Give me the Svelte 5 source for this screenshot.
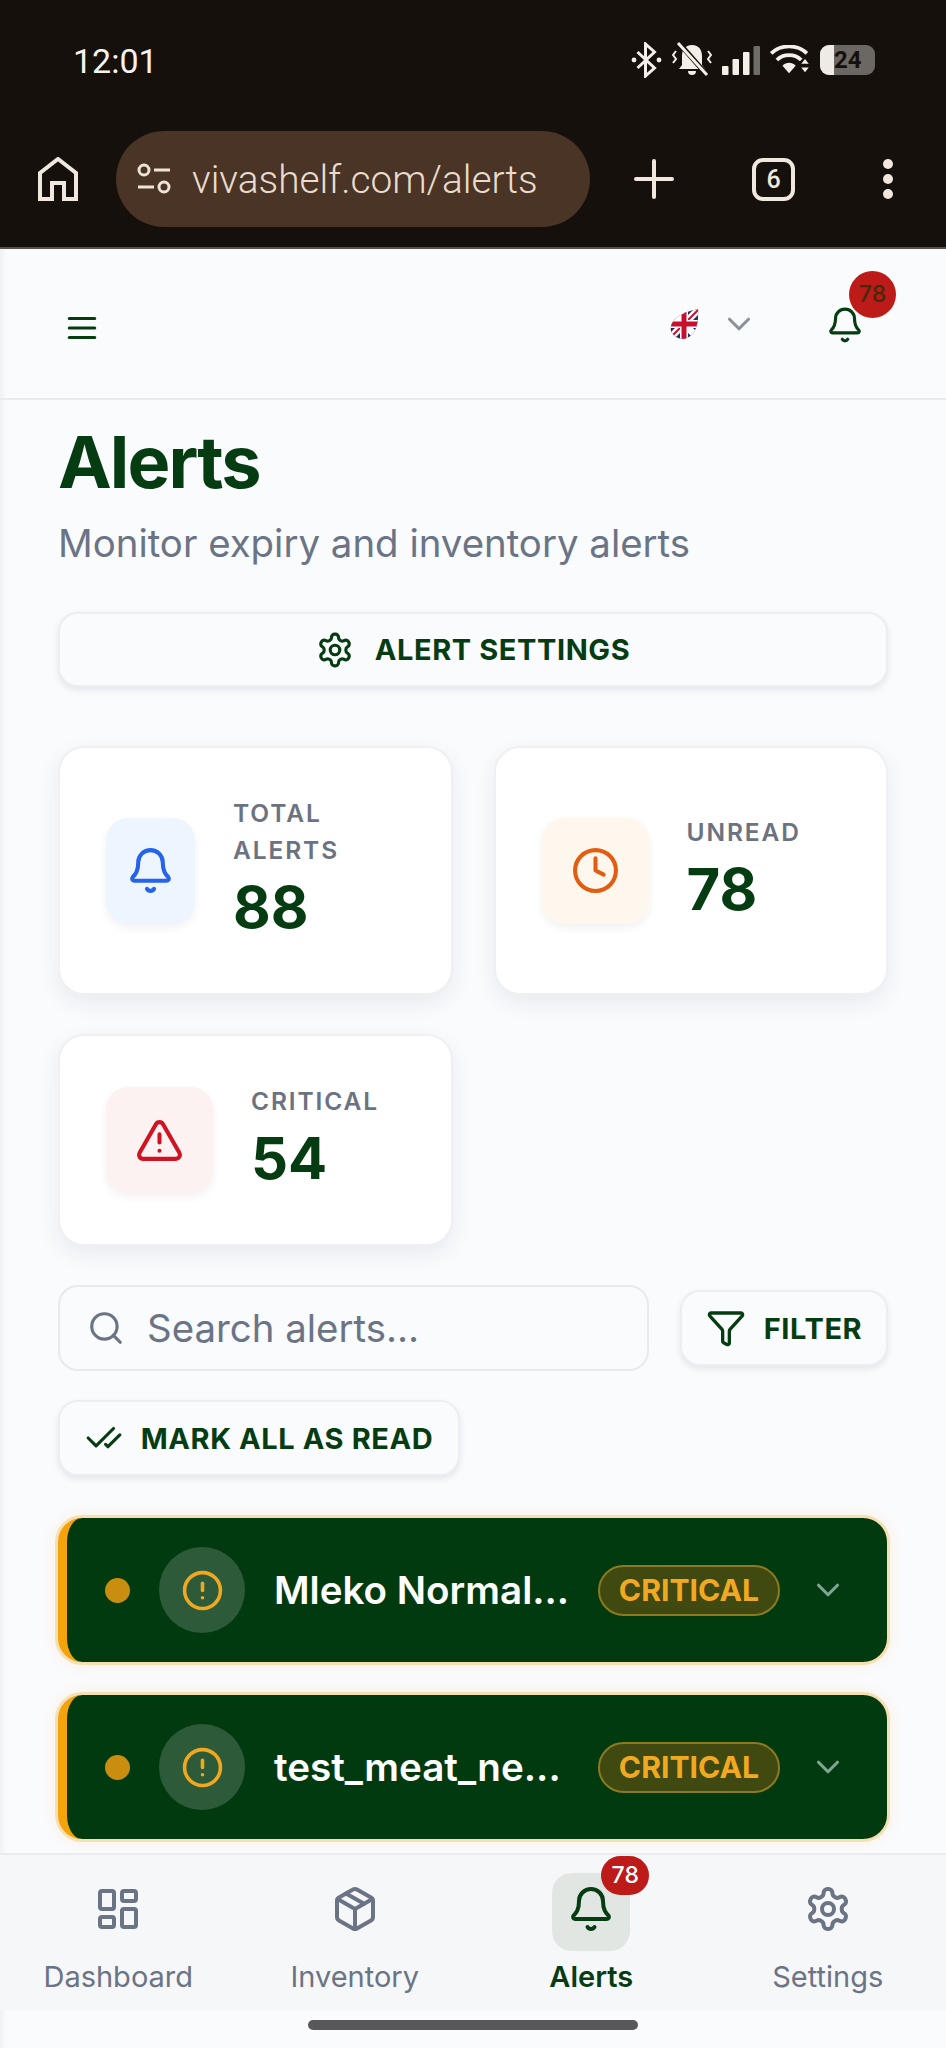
<script>
  const paths = {
    bell: '<path d="M10.268 21a2 2 0 0 0 3.464 0"/><path d="M3.262 15.326A1 1 0 0 0 4 17h16a1 1 0 0 0 .74-1.673C19.41 13.956 18 12.499 18 8A6 6 0 0 0 6 8c0 4.499-1.411 5.956-2.738 7.326"/>',
    gear: '<path d="M12.22 2h-.44a2 2 0 0 0-2 2v.18a2 2 0 0 1-1 1.73l-.43.25a2 2 0 0 1-2 0l-.15-.08a2 2 0 0 0-2.73.73l-.22.38a2 2 0 0 0 .73 2.73l.15.1a2 2 0 0 1 1 1.72v.51a2 2 0 0 1-1 1.74l-.15.09a2 2 0 0 0-.73 2.73l.22.38a2 2 0 0 0 2.73.73l.15-.08a2 2 0 0 1 2 0l.43.25a2 2 0 0 1 1 1.73V20a2 2 0 0 0 2 2h.44a2 2 0 0 0 2-2v-.18a2 2 0 0 1 1-1.73l.43-.25a2 2 0 0 1 2 0l.15.08a2 2 0 0 0 2.73-.73l.22-.39a2 2 0 0 0-.73-2.73l-.15-.08a2 2 0 0 1-1-1.74v-.5a2 2 0 0 1 1-1.74l.15-.09a2 2 0 0 0 .73-2.73l-.22-.38a2 2 0 0 0-2.73-.73l-.15.08a2 2 0 0 1-2 0l-.43-.25a2 2 0 0 1-1-1.73V4a2 2 0 0 0-2-2z"/><circle cx="12" cy="12" r="3"/>',
    clock: '<circle cx="12" cy="12" r="10"/><path d="M12 6v6l4 2"/>',
    triangle: '<path d="m21.73 18-8-14a2 2 0 0 0-3.48 0l-8 14A2 2 0 0 0 4 21h16a2 2 0 0 0 1.73-3"/><path d="M12 9v4"/><path d="M12 17h.01"/>',
    search: '<path d="m21 21-4.34-4.34"/><circle cx="11" cy="11" r="8"/>',
    funnel: '<path d="M10 20a1 1 0 0 0 .553.895l2 1A1 1 0 0 0 14 21v-7a2 2 0 0 1 .517-1.341L21.74 4.67A1 1 0 0 0 21 3H3a1 1 0 0 0-.742 1.67l7.225 7.989A2 2 0 0 1 10 14z"/>',
    checks: '<path d="M18 6 7 17l-5-5"/><path d="m22 10-7.5 7.5L13 16"/>',
    alert: '<circle cx="12" cy="12" r="10"/><path d="M12 8v4"/><path d="M12 16h.01"/>',
    chevron: '<path d="m6 9 6 6 6-6"/>',
    menu: '<path d="M4 6h16"/><path d="M4 12h16"/><path d="M4 18h16"/>',
    dashboard: '<rect x="3" y="3" width="7" height="9" rx="1"/><rect x="14" y="3" width="7" height="5" rx="1"/><rect x="14" y="12" width="7" height="9" rx="1"/><rect x="3" y="16" width="7" height="5" rx="1"/>',
    box: '<path d="m7.5 4.27 9 5.15"/><path d="M21 8a2 2 0 0 0-1-1.73l-7-4a2 2 0 0 0-2 0l-7 4A2 2 0 0 0 3 8v8a2 2 0 0 0 1 1.73l7 4a2 2 0 0 0 2 0l7-4A2 2 0 0 0 21 16Z"/><path d="m3.3 7 8.7 5 8.7-5"/><path d="M12 22V12"/>'
  };

  const stats = [
    { label: 'TOTAL ALERTS', value: 88, icon: 'bell', tone: 'blue' },
    { label: 'UNREAD', value: 78, icon: 'clock', tone: 'orange' },
    { label: 'CRITICAL', value: 54, icon: 'triangle', tone: 'red' }
  ];

  const alerts = ['Mleko Normal...', 'test_meat_ne...'];

  const navItems = [
    { label: 'Dashboard', icon: 'dashboard' },
    { label: 'Inventory', icon: 'box' },
    { label: 'Alerts', icon: 'bell', active: true, badge: 78 },
    { label: 'Settings', icon: 'gear' }
  ];
</script>

{#snippet icon(name, size, cls = '')}
  <svg class={cls} width={size} height={size} viewBox="0 0 24 24" fill="none" stroke="currentColor" stroke-width="2" stroke-linecap="round" stroke-linejoin="round">{@html paths[name]}</svg>
{/snippet}

<div class="screen">
  <div class="chrome">
    <div class="status">
      <span class="time">12:01</span>
      <div class="status-icons">
        <svg width="31" height="36" viewBox="0 0 30 36" fill="none" stroke="#f4efe9" stroke-width="3"><path d="M6 10 23 26 14 34V2l9 8L6 26"/><circle cx="2.5" cy="18" r="2.4" fill="#f4efe9" stroke="none"/><circle cx="27.5" cy="18" r="2.4" fill="#f4efe9" stroke="none"/></svg>
        <svg width="40" height="36" viewBox="0 0 40 36" fill="none"><path d="M20 3c7 0 10 5 10 11v9l3 4H7l3-4v-9c0-6 3-11 10-11z" fill="#f4efe9"/><path d="M16 29h8a4 4 0 0 1-8 0z" fill="#f4efe9"/><path d="M7 1 35 33" stroke="#15100b" stroke-width="5"/><path d="M6 1 35 33" stroke="#f4efe9" stroke-width="3"/><path d="M4 9l-3 4 3 4-3 4M36 9l3 4-3 4 3 4" stroke="#f4efe9" stroke-width="2"/></svg>
        <svg width="38" height="29" viewBox="0 0 38 29"><rect x="0" y="20" width="6.5" height="9" rx="1" fill="#f4efe9"/><rect x="10.5" y="13" width="6.5" height="16" rx="1" fill="#f4efe9"/><rect x="21" y="6" width="6.5" height="23" rx="1" fill="#f4efe9"/><rect x="31.5" y="0" width="6.5" height="29" rx="1" fill="#6f6b67"/></svg>
        <svg width="40" height="30" viewBox="0 0 42 32" fill="none"><path d="M1 9c10-10 28-10 38 0" stroke="#f4efe9" stroke-width="4"/><path d="M7 16c7-7 19-7 26 0" stroke="#f4efe9" stroke-width="4"/><path d="M13 22l7 8 7-8c-4-4-10-4-14 0z" fill="#f4efe9"/><path d="M33 20l4-5 4 5zM33 24l4 5 4-5z" fill="#f4efe9"/></svg>
        <div class="battery">
          <span class="battery-fill"></span>
          <span class="battery-num">24</span>
        </div>
      </div>
    </div>
    <div class="toolbar">
      <svg class="home" width="40" height="44" viewBox="0 0 40 44" fill="none" stroke="#f0e8de" stroke-width="4"><path d="M2 42V16L20 2l18 14v26H26V26H14v16z"/></svg>
      <div class="url">
        <svg width="36" height="36" viewBox="0 0 36 36" fill="none" stroke="#efe4d8" stroke-width="3"><circle cx="8" cy="9" r="5"/><path d="M18 9h16M2 26h16"/><circle cx="28" cy="26" r="5"/></svg>
        <span>vivashelf.com/alerts</span>
      </div>
      <svg class="plus" width="40" height="40" viewBox="0 0 40 40" stroke="#f0e8de" stroke-width="4" stroke-linecap="round"><path d="M20 2v36M2 20h36"/></svg>
      <div class="tabs">6</div>
      <div class="dots"><i></i><i></i><i></i></div>
    </div>
  </div>

  <header class="topbar">
    {@render icon('menu', 38, 'menu-icon')}
    <div class="topbar-right">
      <svg class="flag" width="30" height="30" viewBox="0 0 30 30">
        <defs><clipPath id="leaf"><path d="M2 22C0 12 10 4 29 0c1 16-3 28-14 30-6 0-11-3-13-8z"/></clipPath></defs>
        <g clip-path="url(#leaf)">
          <rect width="30" height="30" fill="#1f2a6b"/>
          <path d="M0 30 30 0M0 0l30 30" stroke="#fff" stroke-width="7"/>
          <path d="M0 30 30 0" stroke="#c8102e" stroke-width="2"/>
          <path d="M15 0v30M0 15h30" stroke="#fff" stroke-width="8"/>
          <path d="M15 0v30M0 15h30" stroke="#c8102e" stroke-width="5"/>
        </g>
      </svg>
      <span class="lang-chevron">{@render icon('chevron', 38)}</span>
      <div class="bell-wrap">
        {@render icon('bell', 38)}
        <span class="top-badge">78</span>
      </div>
    </div>
  </header>

  <main class="content">
    <h1>Alerts</h1>
    <p class="subtitle">Monitor expiry and inventory alerts</p>

    <button class="btn btn-wide">
      {@render icon('gear', 38)}
      ALERT SETTINGS
    </button>

    <div class="stats">
      {#each stats as stat}
        <div class="stat-card">
          <div class="tile {stat.tone}">{@render icon(stat.icon, 49)}</div>
          <div>
            <div class="stat-label">{stat.label}</div>
            <div class="stat-value">{stat.value}</div>
          </div>
        </div>
      {/each}
    </div>

    <div class="search-row">
      <div class="search">
        {@render icon('search', 38)}
        <span>Search alerts...</span>
      </div>
      <button class="btn btn-filter">
        {@render icon('funnel', 40)}
        FILTER
      </button>
    </div>

    <button class="btn btn-mark">
      {@render icon('checks', 38)}
      MARK ALL AS READ
    </button>

    <div class="alert-list">
      {#each alerts as title}
        <div class="alert-row">
          <span class="dot"></span>
          <span class="alert-icon">{@render icon('alert', 43)}</span>
          <span class="alert-title">{title}</span>
          <span class="pill">CRITICAL</span>
          <span class="alert-chevron">{@render icon('chevron', 38)}</span>
        </div>
      {/each}
    </div>
  </main>

  <nav class="bottom">
    {#each navItems as item}
      <div class="nav-item" class:active={item.active}>
        <div class="nav-icon">
          {@render icon(item.icon, 48)}
          {#if item.badge}<span class="nav-badge">{item.badge}</span>{/if}
        </div>
        <span>{item.label}</span>
      </div>
    {/each}
  </nav>
  <div class="home-area"><span class="home-bar"></span></div>
</div>

<style>
  :global(body) {
    margin: 0;
    background: #fafbfd;
  }

  .screen {
    width: 946px;
    height: 2048px;
    display: flex;
    flex-direction: column;
    overflow: hidden;
    font-family: Inter, "Liberation Sans", sans-serif;
    background: #fafbfd;
    box-shadow: inset 7px 0 6px -5px rgba(30, 40, 60, 0.06);
  }

  .chrome {
    height: 247px;
    flex: none;
    background: #15100b;
    border-bottom: 2px solid #57524d;
  }

  .status {
    height: 122px;
    padding: 0 71px 0 73px;
    display: flex;
    align-items: center;
    justify-content: space-between;
  }

  .time {
    font: 400 34px Roboto, sans-serif;
    color: #f6f2ee;
  }

  .status-icons {
    display: flex;
    align-items: center;
    gap: 10px;
    margin-top: -2px;
  }

  .battery {
    position: relative;
    width: 55px;
    height: 30px;
    border-radius: 9px;
    background: #6b6762;
    overflow: hidden;
  }

  .battery-fill {
    position: absolute;
    left: 0;
    top: 0;
    bottom: 0;
    width: 14px;
    background: #eeeae6;
  }

  .battery-num {
    position: absolute;
    left: 14px;
    top: 2px;
    font: 700 24px/26px Roboto, sans-serif;
    color: #15100b;
  }

  .toolbar {
    display: flex;
    align-items: center;
    height: 96px;
    margin-top: 9px;
    padding-left: 38px;
    color: #f0e8de;
  }

  .url {
    width: 474px;
    height: 96px;
    margin-left: 38px;
    margin-right: 44px;
    box-sizing: border-box;
    padding-left: 20px;
    display: flex;
    align-items: center;
    gap: 20px;
    border-radius: 48px;
    background: #4a3425;
    font: 300 38.8px Roboto, sans-serif;
    color: #e9dccf;
  }

  .tabs {
    width: 43px;
    height: 43px;
    margin-left: 78px;
    box-sizing: border-box;
    border: 4px solid #f0e8de;
    border-radius: 11px;
    display: flex;
    align-items: center;
    justify-content: center;
    font: 500 25px Roboto, sans-serif;
  }

  .dots {
    margin-left: 88px;
    display: flex;
    flex-direction: column;
    gap: 5px;
  }

  .dots i {
    width: 10px;
    height: 10px;
    border-radius: 50%;
    background: #f0e8de;
  }

  .topbar {
    height: 151px;
    flex: none;
    box-sizing: border-box;
    display: flex;
    align-items: center;
    justify-content: space-between;
    padding: 0 61px 0 63px;
    border-bottom: 2px solid #e8eaed;
    color: #063c12;
  }

  .topbar :global(.menu-icon) {
    margin-top: 8px;
  }

  .topbar-right {
    display: flex;
    align-items: center;
  }

  .lang-chevron {
    display: flex;
    margin-left: 21.5px;
    color: #8c9299;
  }

  .bell-wrap {
    position: relative;
    display: flex;
    margin-left: 68px;
    margin-right: 21px;
    margin-top: 2px;
  }

  .top-badge {
    position: absolute;
    left: 23px;
    top: -35px;
    width: 47px;
    height: 47px;
    border-radius: 50%;
    background: #bd1a1a;
    color: #472a08;
    font: 500 23px/47px Inter, sans-serif;
    text-align: center;
  }

  .content {
    flex: 1;
    min-height: 0;
    overflow: hidden;
    padding: 22px 58px 0 58px;
  }

  h1 {
    margin: 0;
    font-size: 72px;
    line-height: 80px;
    font-weight: 700;
    letter-spacing: -1.9px;
    color: #063c12;
  }

  .subtitle {
    margin: 17px 0 45px;
    font-size: 38.4px;
    line-height: 48px;
    color: #6b7485;
  }

  .btn {
    display: flex;
    align-items: center;
    justify-content: center;
    box-sizing: border-box;
    border: 2px solid #eceef1;
    border-radius: 20px;
    background: #fafbfd;
    box-shadow: 0 3px 6px rgba(30, 40, 60, 0.1);
    font-family: inherit;
    font-size: 29px;
    font-weight: 700;
    letter-spacing: 0.6px;
    color: #063c12;
  }

  .btn-wide {
    width: 100%;
    height: 75px;
    gap: 21px;
  }

  .stats {
    margin-top: 59px;
    display: grid;
    grid-template-columns: 1fr 1fr;
    gap: 39px 41px;
  }

  .stat-card {
    display: flex;
    align-items: center;
    gap: 38px;
    padding: 47px 46px;
    border: 2px solid #eef0f3;
    border-radius: 26px;
    background: #fff;
    box-shadow: 0 8px 22px rgba(30, 40, 60, 0.08);
    box-sizing: border-box;
  }

  .tile {
    flex: none;
    width: 107px;
    height: 106px;
    border-radius: 22px;
    display: flex;
    align-items: center;
    justify-content: center;
    box-shadow: 0 4px 8px rgba(30, 40, 60, 0.06);
  }

  .blue {
    width: 89px;
    background: #edf5ff;
    color: #2563eb;
  }

  .orange {
    background: #fef7ee;
    color: #e25c12;
  }

  .red {
    background: #fdf2f2;
    color: #cf1322;
  }

  .stat-label {
    font-size: 24.5px;
    line-height: 37px;
    font-weight: 600;
    letter-spacing: 1.9px;
    color: #6b7280;
  }

  .stat-value {
    font-size: 58px;
    line-height: 77px;
    font-weight: 700;
    color: #063c12;
  }

  .search-row {
    margin-top: 39px;
    display: flex;
    align-items: center;
    justify-content: space-between;
  }

  .search {
    width: 591px;
    height: 86px;
    box-sizing: border-box;
    padding-left: 27px;
    display: flex;
    align-items: center;
    gap: 22px;
    border: 2px solid #e8eaee;
    border-radius: 20px;
    color: #6b7485;
    font-size: 38.4px;
  }

  .btn-filter {
    width: 208px;
    height: 76px;
    gap: 18px;
  }

  .btn-mark {
    width: 402px;
    height: 76px;
    margin-top: 29px;
    gap: 18px;
  }

  .alert-list {
    margin-top: 42px;
    margin-right: 1px;
    display: flex;
    flex-direction: column;
    gap: 33px;
  }

  .alert-row {
    height: 144px;
    box-sizing: border-box;
    display: flex;
    align-items: center;
    padding-left: 38px;
    border-left: 9px solid #f5a30b;
    border-radius: 24px;
    background: #023a0f;
    box-shadow: 0 0 0 3px #f6dfb2, 0 0 14px 4px rgba(245, 158, 11, 0.1);
  }

  .dot {
    width: 25px;
    height: 25px;
    border-radius: 50%;
    background: #c98e10;
  }

  .alert-icon {
    width: 86px;
    height: 86px;
    margin-left: 29px;
    border-radius: 50%;
    background: #2d5a38;
    color: #f0a820;
    display: flex;
    align-items: center;
    justify-content: center;
  }

  .alert-title {
    width: 324px;
    margin-left: 29px;
    font-size: 38.6px;
    font-weight: 600;
    color: #fff;
  }

  .pill {
    width: 182px;
    height: 51px;
    box-sizing: border-box;
    border: 2px solid #8c7a22;
    border-radius: 26px;
    background: #404a10;
    color: #f2a922;
    font-size: 30.2px;
    font-weight: 700;
    line-height: 47px;
    text-align: center;
  }

  .alert-chevron {
    display: flex;
    margin-left: 29px;
    color: #7fa692;
  }

  .bottom {
    height: 157px;
    flex: none;
    display: grid;
    grid-template-columns: repeat(4, 236.5px);
    box-sizing: border-box;
    border-top: 2px solid #e9ebee;
    background: #f6f7f9;
  }

  .nav-item {
    display: flex;
    flex-direction: column;
    align-items: center;
    color: #6b7485;
    font-size: 29px;
  }

  .nav-icon {
    position: relative;
    width: 78px;
    height: 78px;
    margin-top: 18px;
    margin-bottom: 8px;
    padding-bottom: 6px;
    box-sizing: border-box;
    border-radius: 20px;
    display: flex;
    align-items: center;
    justify-content: center;
  }

  .active {
    color: #063c12;
    font-weight: 600;
  }

  .active .nav-icon {
    background: #e1e6e3;
  }

  .nav-badge {
    position: absolute;
    left: 49px;
    top: -17px;
    width: 48px;
    height: 39px;
    border-radius: 20px;
    background: #bd1a1a;
    color: #fff;
    font-size: 23px;
    font-weight: 500;
    line-height: 39px;
    text-align: center;
  }

  .home-area {
    height: 38px;
    flex: none;
    display: flex;
    justify-content: center;
    padding-top: 10px;
    box-sizing: border-box;
  }

  .home-bar {
    width: 330px;
    height: 10px;
    border-radius: 5px;
    background: #58585a;
  }
</style>
